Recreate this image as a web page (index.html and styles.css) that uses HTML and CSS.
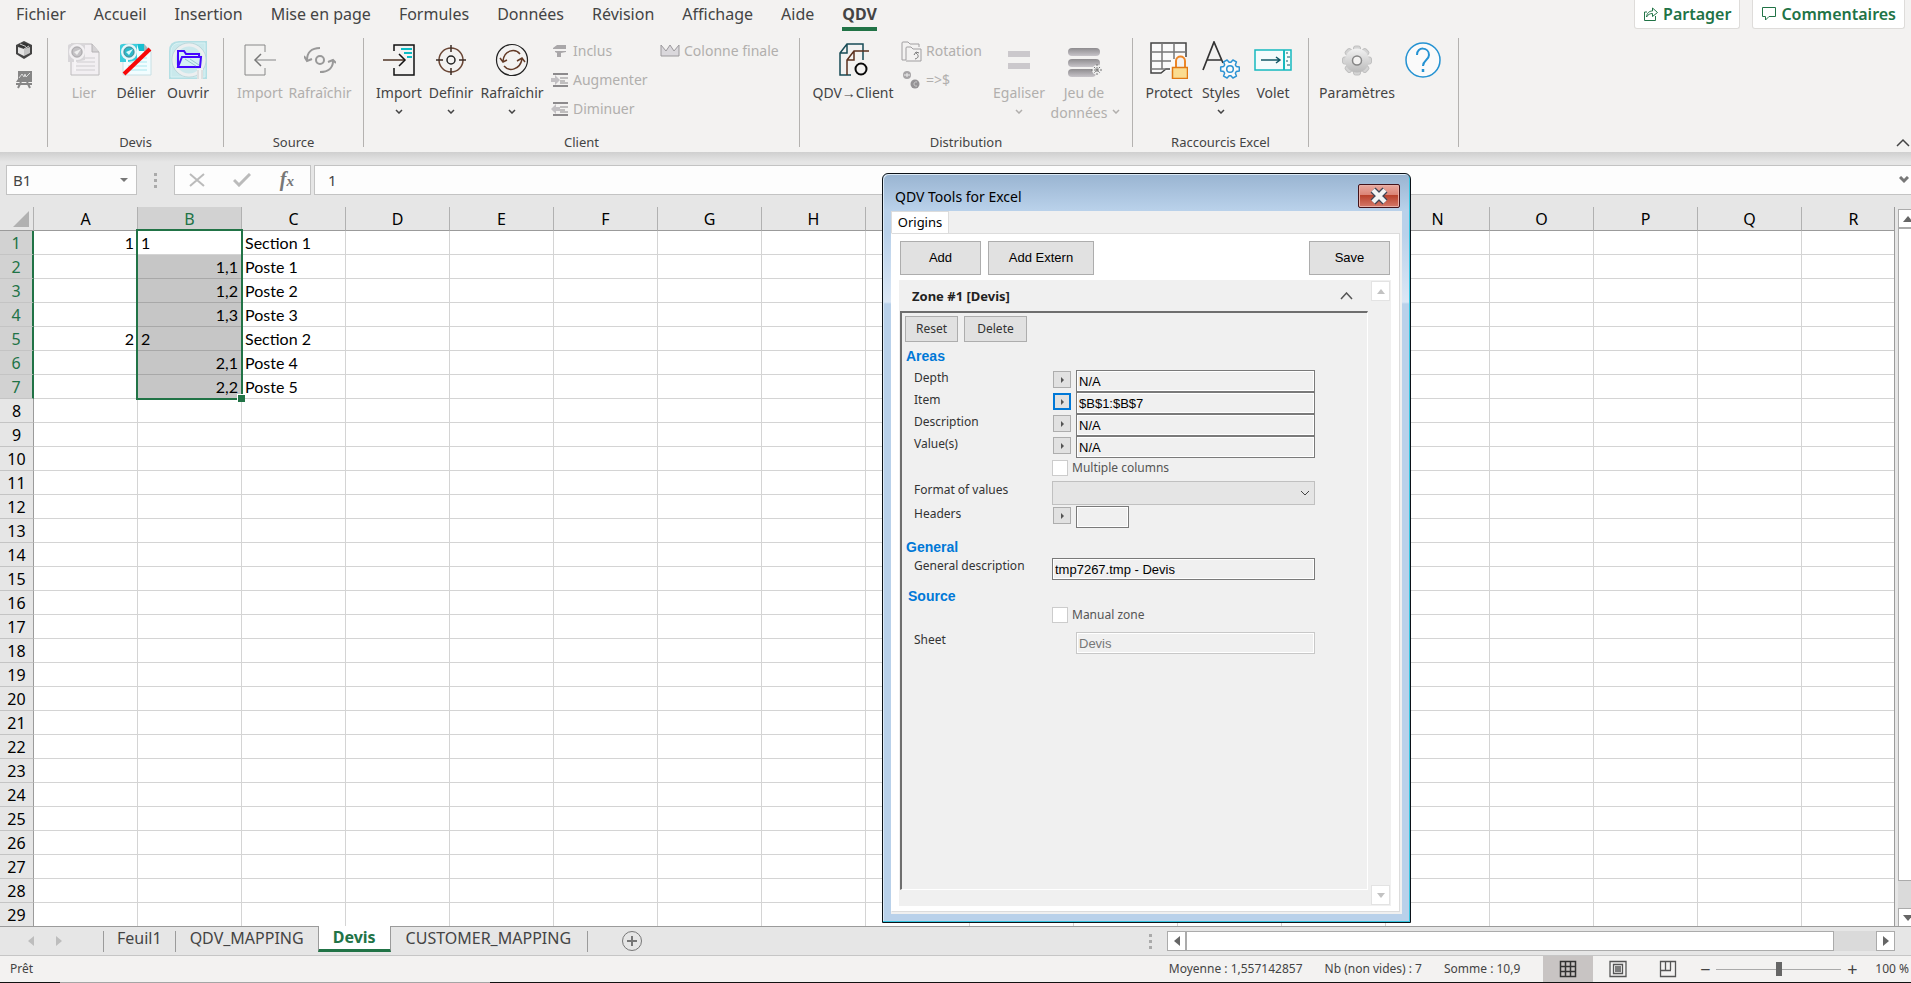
FILE: index.html
```html
<!DOCTYPE html>
<html lang="fr">
<head>
<meta charset="utf-8">
<title>Devis</title>
<link rel="stylesheet" href="styles.css">
</head>
<body>
<header class="ribbon">
  <div class="tabbar">
    <nav class="tabs">
      <a class="tab" href="#">Fichier</a><a class="tab" href="#">Accueil</a><a class="tab" href="#">Insertion</a><a class="tab" href="#">Mise en page</a><a class="tab" href="#">Formules</a><a class="tab" href="#">Données</a><a class="tab" href="#">Révision</a><a class="tab" href="#">Affichage</a><a class="tab" href="#">Aide</a><a class="tab current" href="#">QDV</a>
    </nav>
    <div class="share">
      <button class="share-btn"><svg width="16" height="16" viewBox="0 0 16 16"><path d="M4 6H1.500V14.500H12.500V10M3.500 11C4 7 6 5 9.500 5V2L14.500 6.500L9.500 10.500V7.500C7 7.500 5 8.500 3.500 11"/></svg>Partager</button>
      <button class="share-btn"><svg width="16" height="16" viewBox="0 0 16 16"><path d="M1.500 1.500H14.500V10.500H8L4.500 14V10.500H1.500Z"/></svg>Commentaires</button>
    </div>
  </div>
  <div class="groups">
    <section class="group quick">
      <button class="mini" aria-label="Cube"><svg width="18" height="20" viewBox="0 0 18 20"><path d="M9 1L17 5V14L9 19L1 14V5Z" fill="#444"/><path d="M3 6L9 3L15 5L9 8Z" fill="#333"/><path d="M3 7L9 9V16L3 13Z" fill="#e4e4e4"/><path d="M9 9L15 7V13L9 16Z" fill="#c4c4c4"/><path d="M9 9L14 6M5 4L11 6.500" stroke="#ccc"/></svg></button>
      <button class="mini" aria-label="Tableau"><svg width="18" height="19" viewBox="0 0 18 19"><path d="M3 1H17V12H1L3 9Z" fill="#868686"/><path d="M4 8L7 4L9 7L10 4L11 7L15 3" stroke="#ddd" fill="none"/><path d="M6 12L3 18M12 12L15 18M1 14H17" stroke="#868686" stroke-width="2"/></svg></button>
    </section>
    <section class="group devis">
      <div class="row">
        <button class="big w52" disabled><span class="ico"><svg width="32" height="34" viewBox="0 0 32 34"><path d="M3 1H24L31 9V32H3Z" fill="#f2eff2" stroke="#bebcbe"/><path d="M24 1V9H31" fill="#d5d3d5" stroke="#b4b2b4"/><path d="M12 15H27M9 19H27M7 23H27M7 27H27" stroke="#cfcdd0"/><path d="M0 3Q0 1 3 1H17V17L8 19H0Z" fill="#d8d6d9"/><path d="M7 16V28" stroke="#f6f4f6" stroke-width="2"/><circle cx="9" cy="9" r="7" fill="#dcdadc" stroke="#f2f0f2" stroke-width="2"/><circle cx="9" cy="9" r="5" fill="#c4c2c5" stroke="#a9a7aa"/><path d="M6 9L13 6L9 12Z" fill="#eee"/></svg></span><span>Lier</span></button>
        <button class="big w52"><span class="ico"><svg width="32" height="34" viewBox="0 0 32 34"><path d="M3 1H24L31 9V32H3Z" fill="#f2fdff" stroke="#c8dfe4"/><path d="M17 1H24V8H19Z" fill="#16bfd0"/><path d="M24 1L31 9H24Z" fill="#9fb9bd"/><path d="M12 15H27M9 19H27M7 23H27M7 27H27" stroke="#a9e7ef"/><path d="M0 3Q0 1 3 1H17V17L8 19H0Z" fill="#3ecddc"/><path d="M7 16V28" stroke="#f4fdff" stroke-width="2"/><circle cx="9" cy="9" r="7" fill="#a6e9f0" stroke="#eef6f8" stroke-width="2"/><circle cx="9" cy="9" r="5" fill="#2bb9c9" stroke="#4b8390"/><path d="M6 9L13 6L9 12Z" fill="#d9fafd"/><path d="M4 31L30 6" stroke="#f80808" stroke-width="4"/></svg></span><span>Délier</span></button>
        <button class="big w52"><span class="ico"><svg width="38" height="38" viewBox="0 0 38 38"><path d="M0 10Q0 0 10 0H38V38H0Z" fill="#b4dfe4"/><path d="M2 11Q2 2 11 2H36V36H2Z" fill="#c9e9ec" stroke="#d8f1f3"/><circle cx="20" cy="19" r="17" fill="none" stroke="#bcd4d8"/><circle cx="20" cy="19" r="15" fill="#cbe8ec" stroke="#eceff0" stroke-width="3"/><path d="M31 28V38" stroke="#f3f3f3" stroke-width="6"/><path d="M29 29V38M33 29V38" stroke="#ccc"/><path d="M9 26V10H15L17 13H30V16M9 26L13 16H32L31 26Z" fill="#d5f0f5" stroke="#4405ff" stroke-width="2"/><path d="M16 18L27 25M21 18L30 24" stroke="#97c8d0"/></svg></span><span>Ouvrir</span></button>
      </div>
      <h2>Devis</h2>
    </section>
    <section class="group source">
      <div class="row">
        <button class="big w50" disabled><span class="ico"><svg width="32" height="34" viewBox="0 0 32 34"><path d="M21 9V2H1V32H21V25" stroke="#888" fill="none"/><path d="M11 17H32" stroke="#aaa" stroke-width="1.500"/><path d="M17 11L11 17L17 23" stroke="#777" fill="none" stroke-width="1.500"/></svg></span><span>Import</span></button>
        <button class="big w70" disabled><span class="ico"><svg width="32" height="34" viewBox="0 0 32 34"><g fill="none" stroke="#999" stroke-width="2"><circle cx="16" cy="17" r="4"/><path d="M16 5C7 5 3 10 3 17M0 13L3 18L8 16M16 29C24 29 29 25 29 18M24 19L29 17L32 20"/></g></svg></span><span>Rafraîchir</span></button>
      </div>
      <h2>Source</h2>
    </section>
    <section class="group client">
      <div class="row">
        <button class="big w52"><span class="ico"><svg width="32" height="34" viewBox="0 0 32 34"><path d="M11 8V2H31V32H11V25" stroke="#111" stroke-width="1.500" fill="none"/><path d="M18 6H29M21 10H29M24 14H29" stroke="#0bbcc5" stroke-width="2"/><path d="M0 17H21" stroke="#4f3425" stroke-width="1.500"/><path d="M16 11L22 17L16 23" stroke="#111" stroke-width="1.500" fill="none"/></svg></span><span>Import</span><svg class="chev" viewBox="0 0 8 5"><path d="M1 1L4 4L7 1"/></svg></button>
        <button class="big w52"><span class="ico"><svg width="32" height="34" viewBox="0 0 32 34"><circle cx="16" cy="17" r="12" stroke="#6a4635" stroke-width="1.500" fill="none"/><circle cx="16" cy="17" r="4" stroke="#222" stroke-width="1.500" fill="none"/><path d="M16 2V9M16 25V32M1 17H8M24 17H31" stroke="#3c2c25" stroke-width="1.500"/></svg></span><span>Definir</span><svg class="chev" viewBox="0 0 8 5"><path d="M1 1L4 4L7 1"/></svg></button>
        <button class="big w70"><span class="ico"><svg width="34" height="34" viewBox="0 0 34 34"><circle cx="17" cy="17" r="15.500" stroke="#222" fill="none" stroke-width="1.200"/><path d="M25 11C20 5 9 7 8 18M5 15L8 19L12 17M9 23C14 29 25 27 27 16M22 18L27 15L30 19" stroke="#633a26" fill="none" stroke-width="1.500"/></svg></span><span>Rafraîchir</span><svg class="chev" viewBox="0 0 8 5"><path d="M1 1L4 4L7 1"/></svg></button>
        <div class="small-col first-col">
          <button class="small" disabled><svg width="18" height="16" viewBox="0 0 18 16"><path d="M2 5L6 2H15V6H2ZM4 8H15V9L10 10V14H6V10L4 9Z" fill="#a9a7a9"/></svg>Inclus</button>
          <button class="small" disabled><svg width="18" height="16" viewBox="0 0 18 16"><path d="M2 2H17M2 14H17" stroke="#8c8a8c" stroke-width="2"/><path d="M9 6H17M9 9H14M9 11H17" stroke="#8c8a8c"/><path d="M0 6H4V3L9 8L4 13V10H0Z" fill="#c2c0c3"/></svg>Augmenter</button>
          <button class="small" disabled><svg width="18" height="16" viewBox="0 0 18 16"><path d="M2 2H17M2 14H17" stroke="#8c8a8c" stroke-width="2"/><path d="M9 6H17M9 9H14M9 11H17" stroke="#8c8a8c"/><path d="M9 6H5V3L0 8L5 13V10H9Z" fill="#c2c0c3"/></svg>Diminuer</button>
        </div>
        <div class="small-col">
          <button class="small" disabled><svg width="20" height="16" viewBox="0 0 20 16"><path d="M1 2L6 8L10 2L14 8L19 2V13H1Z" fill="#dad8dc" stroke="#9b999c"/></svg>Colonne finale</button>
        </div>
      </div>
      <h2>Client</h2>
    </section>
    <section class="group distribution">
      <div class="row">
        <button class="big w88"><span class="ico"><svg width="32" height="34" viewBox="0 0 32 34"><path d="M14 32H3V10L10 1H26V17M3 10H10V1" fill="none" stroke="#174b56" stroke-width="1.500"/><path d="M10 32V17L17 8H32M10 17H17V8" fill="none" stroke="#5b301e" stroke-width="1.500"/><circle cx="24" cy="26" r="5.500" fill="none" stroke="#080808" stroke-width="2"/></svg></span><span>QDV→Client</span></button>
        <div class="small-col rot">
          <button class="small" disabled><svg width="21" height="21" viewBox="0 0 21 21"><path d="M5 19H1V2Q1 1 2 1H7L9 3H18V6M5 19V7Q5 6 6 6H10L12 8H20V20H5" fill="none" stroke="#a09ea0"/><path d="M14 18C18 17 18 14 15 12M13 14L15 11L18 12" fill="none" stroke="#777"/></svg>Rotation</button>
          <button class="small" disabled><svg width="21" height="21" viewBox="0 0 21 21"><circle cx="6" cy="5" r="4" fill="#a6a4a6"/><circle cx="14" cy="14" r="4.500" fill="#959395"/><path d="M3 5H9M6 3V7" stroke="#eee"/><path d="M16 12C12 11 12 17 16 16" stroke="#ccc" fill="none"/></svg>=&gt;$</button>
        </div>
        <button class="big w58" disabled><span class="ico"><svg width="24" height="34" viewBox="0 0 24 34"><path d="M1 8H23V14H1ZM1 20H23V26H1Z" fill="#cbc8cc"/></svg></span><span>Egaliser</span><svg class="chev" viewBox="0 0 8 5"><path d="M1 1L4 4L7 1"/></svg></button>
        <button class="big w72" disabled><span class="ico"><svg width="36" height="34" viewBox="0 0 36 34"><defs><linearGradient id="bar" x2="0" y2="1"><stop stop-color="#8e8c8f"/><stop offset="1" stop-color="#c7c4c9"/></linearGradient></defs><g fill="url(#bar)"><rect x="2" y="5" width="32" height="8" rx="4"/><rect x="2" y="16" width="32" height="8" rx="4"/><rect x="2" y="26" width="28" height="8" rx="4"/></g><circle cx="31" cy="27" r="5" fill="#eee"/><path d="M31 21V33M25 27H36M28 24L34 30M34 24L28 30" stroke="#777" stroke-dasharray="2 1"/></svg></span><span>Jeu de</span><span class="second">données<svg class="chev inline" viewBox="0 0 8 5"><path d="M1 1L4 4L7 1"/></svg></span></button>
      </div>
      <h2>Distribution</h2>
    </section>
    <section class="group raccourcis">
      <div class="row">
        <button class="big w52"><span class="ico"><svg width="38" height="38" viewBox="0 0 38 38"><path d="M1 2H36V30H18L13 32H1Z" fill="#fafafa"/><path d="M36 16V2H1V32H11L16 28H20" fill="none" stroke="#444" stroke-width="1.500"/><path d="M12 2V28M24 2V18M1 11H36M1 20H21M1 28H16" stroke="#777" stroke-width="1.500" fill="none"/><path d="M26 26V20C26 14 35 14 35 20V26" fill="#f3f2f1" stroke="#ed8627" stroke-width="2"/><rect x="22.500" y="26.500" width="15" height="11" fill="#fbdc90" stroke="#e07914" stroke-width="1.500"/></svg></span><span>Protect</span></button>
        <button class="big w52"><span class="ico"><svg width="38" height="38" viewBox="0 0 38 38"><path d="M1 29L12 1L21 22M5 19H19" stroke="#333" fill="none" stroke-width="1.700"/><g transform="translate(28 28)" fill="#fafafa" stroke="#2d93d3" stroke-width="1.500" stroke-linejoin="round"><path d="M6.300 -2.500L9.300 -2V2L6.300 2.500L5.400 4.200L6.400 7.100L2.900 9L.9 6.700H-.9L-2.900 9L-6.400 7.100L-5.400 4.200L-6.300 2.500L-9.300 2V-2L-6.300 -2.500L-5.400 -4.200L-6.400 -7.100L-2.900 -9L-.9 -6.700H.9L2.900 -9L6.400 -7.100L5.400 -4.200Z"/><circle r="3.300"/></g></svg></span><span>Styles</span><svg class="chev" viewBox="0 0 8 5"><path d="M1 1L4 4L7 1"/></svg></button>
        <button class="big w52"><span class="ico"><svg width="38" height="24" viewBox="0 0 38 24"><rect x="1" y="2" width="36" height="20" fill="#f4fcfc" stroke="#16b9bf" stroke-width="1.500"/><path d="M30 2V22" stroke="#16b9bf" stroke-width="2"/><path d="M7 12H25M22 9L26 12L22 15" stroke="#125866" stroke-width="1.500" fill="none"/><path d="M32 5H34M33 9H36M32 13H34M33 17H36" stroke="#125866"/></svg></span><span>Volet</span></button>
      </div>
      <h2>Raccourcis Excel</h2>
    </section>
    <section class="group params">
      <div class="row">
        <button class="big w82"><span class="ico"><svg width="32" height="34" viewBox="0 0 32 34"><defs><linearGradient id="gear" gradientUnits="userSpaceOnUse" x1="0" y1="3" x2="0" y2="32"><stop stop-color="#f8f8f8"/><stop offset="1" stop-color="#b4b4b4"/></linearGradient></defs><g stroke="#c0c0c0"><g fill="#d4d4d4"><rect x="12.500" y="3" width="7" height="29" rx="2"/><rect x="1.500" y="14" width="29" height="7" rx="2"/><rect x="12.500" y="3" width="7" height="29" rx="2" transform="rotate(45 16 17.500)"/><rect x="12.500" y="3" width="7" height="29" rx="2" transform="rotate(-45 16 17.500)"/></g><circle cx="16" cy="17.500" r="12" fill="url(#gear)" stroke="none"/></g><circle cx="16" cy="17.500" r="4.500" fill="#f3f2f1" stroke="#858585" stroke-width="1.500"/></svg></span><span>Paramètres</span></button>
        <button class="big w50" aria-label="Aide"><span class="ico"><svg width="38" height="38" viewBox="0 0 38 38"><circle cx="19" cy="19" r="17" fill="#fafafa" stroke="#2492d2" stroke-width="1.500"/><path d="M13 14C13 5 25 6 25 14C25 19 19 19 19 25" fill="none" stroke="#2492d2" stroke-width="2"/><path d="M19 28V31" stroke="#2492d2" stroke-width="2.500"/></svg></span></button>
      </div>
    </section>
    <button class="collapse" aria-label="Réduire le ruban"><svg width="14" height="9" viewBox="0 0 14 9"><path d="M1 8L7 2L13 8" fill="none" stroke="#444" stroke-width="1.500"/></svg></button>
  </div>
</header>

<div class="formula">
  <div class="namebox"><input aria-label="Zone de nom" value="B1"><svg width="8" height="4" viewBox="0 0 8 4"><path d="M0 0H8L4 4Z" fill="#777"/></svg></div>
  <span class="dots"><i></i><i></i><i></i></span>
  <div class="fx">
    <button aria-label="Annuler"><svg width="16" height="14" viewBox="0 0 16 14"><path d="M1 1L15 13M15 1L1 13" stroke="#bbb" stroke-width="2"/></svg></button>
    <button aria-label="Entrer"><svg width="18" height="14" viewBox="0 0 18 14"><path d="M1 7L6 12L17 1" fill="none" stroke="#bbb" stroke-width="3"/></svg></button>
    <button aria-label="Insérer une fonction" class="fxi">f<small>x</small></button>
  </div>
  <div class="entry"><input aria-label="Formule" value="1"><svg width="10" height="8" viewBox="0 0 10 8"><path d="M1 1L5 5L9 1" fill="none" stroke="#777" stroke-width="3"/></svg></div>
</div>

<main class="workspace">
  <div class="sheet">
    <table class="cells"><thead></thead><tbody></tbody></table>
    <div class="selection"></div>
  </div>
  <div class="vscroll"><button aria-label="Haut"><svg width="10" height="6" viewBox="0 0 10 6"><path d="M0 6L5 0L10 6Z"/></svg></button><div class="vthumb"></div><div class="vtrack"></div><button aria-label="Bas"><svg width="10" height="6" viewBox="0 0 10 6"><path d="M0 0H10L5 6Z"/></svg></button></div>
</main>

<div class="sheetbar">
  <div class="arrows"><svg width="6" height="10" viewBox="0 0 6 10"><path d="M6 0V10L0 5Z"/></svg><svg width="6" height="10" viewBox="0 0 6 10"><path d="M0 0V10L6 5Z"/></svg></div>
  <nav class="sheets"><a href="#">Feuil1</a><a href="#">QDV_MAPPING</a><a href="#" class="on">Devis</a><a href="#">CUSTOMER_MAPPING</a></nav>
  <button class="plus" aria-label="Nouvelle feuille"><svg width="22" height="22" viewBox="0 0 22 22"><circle cx="11" cy="11" r="9.500" fill="none" stroke="#777"/><path d="M11 6V16M6 11H16" stroke="#777" stroke-width="2"/></svg></button>
  <span class="dots"><i></i><i></i><i></i></span>
  <div class="hscroll"><button aria-label="Gauche"><svg width="6" height="10" viewBox="0 0 6 10"><path d="M6 0V10L0 5Z"/></svg></button><div class="hthumb"></div><div class="htrack"></div><button aria-label="Droite"><svg width="6" height="10" viewBox="0 0 6 10"><path d="M0 0V10L6 5Z"/></svg></button></div>
</div>

<footer class="status">
  <span>Prêt</span>
  <div class="stats"><span>Moyenne : 1,557142857</span><span>Nb (non vides) : 7</span><span>Somme : 10,9</span></div>
  <div class="views">
    <button class="on" aria-label="Normal"><svg width="18" height="18" viewBox="0 0 18 18"><path d="M1.500 1.500H16.500V16.500H1.500ZM6.500 1V17M11.500 1V17M1 6.500H17M1 11.500H17" fill="none" stroke="#333" stroke-width="1.500"/></svg></button>
    <button aria-label="Mise en page"><svg width="18" height="18" viewBox="0 0 18 18"><path d="M1 1.500H17V16.500H1ZM4.500 4.500H13.500V13.500H4.500ZM6 7H12M6 9H12M6 11H12" fill="none" stroke="#555" stroke-width="1.300"/></svg></button>
    <button aria-label="Sauts de page"><svg width="18" height="18" viewBox="0 0 18 18"><path d="M1.500 1.500H16.500V16.500H1.500ZM6.500 1V10M11.500 1V10M1 10.500H12" fill="none" stroke="#555" stroke-width="1.300"/></svg></button>
  </div>
  <div class="zoom"><button>−</button><input type="range" min="0" max="200" value="100" aria-label="Zoom"><button>+</button></div>
  <span class="pct">100 %</span>
</footer>

<section class="dialog" role="dialog" aria-labelledby="dlg-title">
  <div class="titlebar"><h1 id="dlg-title">QDV Tools for Excel</h1><button class="close" aria-label="Fermer"><svg width="20" height="18" viewBox="0 0 20 18"><path d="M4 3L16 15M16 3L4 15" stroke="#3c4657" stroke-width="7"/><path d="M4 3L16 15M16 3L4 15" stroke="#f3f3f3" stroke-width="4.500"/></svg></button></div>
  <div class="client-area">
    <div class="dlg-tabs"><button>Origins</button></div>
    <div class="page">
      <div class="actions"><button class="btn w81">Add</button><button class="btn w106">Add Extern</button><button class="btn w81 end">Save</button></div>
      <div class="zones">
        <div class="zone">
          <div class="zone-head"><h2>Zone #1 [Devis]</h2><svg width="13" height="8" viewBox="0 0 13 8"><path d="M1 7L6.500 1L12 7" fill="none" stroke="#555" stroke-width="1.500"/></svg></div>
          <div class="inset">
            <div class="mini-actions"><button class="btn">Reset</button><button class="btn wide">Delete</button></div>
            <h3>Areas</h3>
            <div class="f"><label for="depth">Depth</label><button class="pick" aria-label="Depth"></button><input id="depth" value="N/A"></div>
            <div class="f"><label for="item">Item</label><button class="pick focus" aria-label="Item"></button><input id="item" value="$B$1:$B$7"></div>
            <div class="f"><label for="desc">Description</label><button class="pick" aria-label="Description"></button><input id="desc" value="N/A"></div>
            <div class="f"><label for="vals">Value(s)</label><button class="pick" aria-label="Value(s)"></button><input id="vals" value="N/A"></div>
            <div class="c"><input type="checkbox" id="multi"><label for="multi">Multiple columns</label></div>
            <div class="f tall"><label for="fmt">Format of values</label><span class="sel"><select id="fmt" disabled><option></option></select><svg width="10" height="6" viewBox="0 0 10 6"><path d="M1 1L5 5L9 1" fill="none" stroke="#444"/></svg></span></div>
            <div class="f"><label for="hdr">Headers</label><button class="pick" aria-label="Headers"></button><input id="hdr" class="short"></div>
            <h3 class="general">General</h3>
            <div class="f"><label for="gdesc">General description</label><input id="gdesc" class="full" value="tmp7267.tmp - Devis"></div>
            <h3 class="src">Source</h3>
            <div class="c"><input type="checkbox" id="manual"><label for="manual">Manual zone</label></div>
            <div class="f sheet-row"><label for="sheet">Sheet</label><span class="pick none"></span><input id="sheet" disabled value="Devis"></div>
          </div>
        </div>
        <div class="dscroll"><button aria-label="Monter"><svg width="8" height="5" viewBox="0 0 8 5"><path d="M0 5L4 0L8 5Z"/></svg></button><button aria-label="Descendre"><svg width="8" height="5" viewBox="0 0 8 5"><path d="M0 0H8L4 5Z"/></svg></button></div>
      </div>
    </div>
  </div>
</section>
<script src="sheet.js"></script>
</body>
</html>
```
FILE: styles.css
```css
* { box-sizing: border-box; }
body { margin: 0; height: 100vh; display: flex; flex-direction: column; overflow: hidden; position: relative; background: #e6e6e6; color: #444; font: 14px/20px "Noto Sans", sans-serif; }
button { font: inherit; color: inherit; background: none; border: 0; padding: 0; margin: 0; }
input, select { font: inherit; color: inherit; border: 0; border-radius: 0; outline: 0; padding: 0; margin: 0; min-width: 0; }
a { color: inherit; text-decoration: none; }
h1, h2, h3 { margin: 0; font-weight: 400; }
svg { display: block; flex: none; }

.ribbon { background: #f3f2f1; height: 152px; flex: none; display: flex; flex-direction: column; }
.tabbar { display: flex; justify-content: space-between; height: 38px; padding: 0 6px 0 16px; }
.tabs { display: flex; gap: 28px; font-size: 16px; line-height: 28px; height: 31px; white-space: nowrap; }
.tab.current { font-weight: 700; border-bottom: 4px solid #217346; line-height: 28px; height: 31px; }
.share { display: flex; gap: 12px; }
.share-btn { height: 29px; display: flex; align-items: center; gap: 4px; padding: 0 8px; background: #fff; border: 1px solid #dedcda; border-top: 0; border-radius: 0 0 3px 3px; color: #217346; font-weight: 600; font-size: 16px; }
.share-btn svg { fill: none; stroke: #217346; }
.groups { display: flex; height: 109px; position: relative; }
.group { border-right: 1px solid #b4b2b0; display: flex; flex-direction: column; justify-content: space-between; flex: none; }
.group h2 { font-size: 13px; line-height: 10px; text-align: center; }
.row { display: flex; }
.quick { width: 48px; justify-content: flex-start; align-items: center; gap: 10px; padding-top: 2px; }
.devis { width: 176px; } .devis .row { padding-left: 10px; }
.source { width: 140px; } .source .row { padding-left: 11px; }
.client { width: 436px; } .client .row { padding-left: 9px; }
.distribution { width: 333px; } .distribution .row { padding-left: 9px; }
.raccourcis { width: 176px; } .raccourcis .row { padding-left: 10px; }
.params { width: 150px; } .params .row { padding-left: 7px; }
.big { display: flex; flex-direction: column; align-items: center; white-space: nowrap; padding-top: 3px; flex: none; }
.big:disabled, .small:disabled { color: #b1afad; }
.ico { height: 38px; display: flex; align-items: center; justify-content: center; margin-bottom: 4px; }
.w50 { width: 50px; } .w52 { width: 52px; } .w58 { width: 58px; } .w70 { width: 70px; } .w72 { width: 72px; } .w82 { width: 82px; } .w88 { width: 88px; }
.chev { width: 8px; height: 5px; margin-top: 6px; fill: none; stroke: currentColor; stroke-width: 1.5; }
.second { position: relative; margin-right: 10px; }
.chev.inline { position: absolute; right: -13px; top: 0; }
.small-col { display: flex; flex-direction: column; gap: 3px; }
.first-col { width: 113px; padding-left: 4px; }
.rot { width: 93px; padding-left: 4px; }
.small { display: flex; align-items: center; gap: 4px; height: 26px; white-space: nowrap; font-size: 14px; }
.collapse { position: absolute; right: 1px; bottom: 0; }

.formula { height: 55px; flex: none; display: flex; padding: 13px 0 12px 6px; background: linear-gradient(#cfcfcf, #e6e6e6 10px); }
.namebox { width: 131px; background: #fdfdfd; border: 1px solid #c3c3c3; display: flex; align-items: center; padding: 0 8px 0 6px; }
.namebox input { flex: 1; background: none; font-size: 15px; }
.dots { display: flex; flex-direction: column; justify-content: center; gap: 3px; width: 37px; align-items: center; }
.dots i { width: 3px; height: 3px; background: #aaa; }
.fx { width: 137px; border: 1px solid #c3c3c3; background: #fdfdfd; display: flex; align-items: center; justify-content: space-between; padding: 0 16px 0 14px; }
.fxi { font: italic bold 20px/26px "Liberation Serif", serif; color: #777; }
.fxi small { font-size: 15px; }
.entry { flex: 1; margin-left: 3px; border: 1px solid #c3c3c3; border-right: 0; background: #fdfdfd; display: flex; align-items: center; padding: 0 2px 0 13px; }
.entry input { flex: 1; background: none; font-size: 15px; }

.workspace { flex: 1; min-height: 0; display: flex; gap: 3px; overflow: hidden; }
.sheet { flex: 1; min-width: 0; overflow: hidden; position: relative; border-right: 1px solid #9b9b9b; }
.cells { border-collapse: separate; border-spacing: 0; table-layout: fixed; width: 1906px; background: #fff; color: #000; font-size: 15px; }
.cells th, .cells td { height: 24px; padding: 0 3px; line-height: 22px; border-right: 1px solid #d4d4d4; border-bottom: 1px solid #d4d4d4; text-align: left; white-space: nowrap; overflow: hidden; }
.cells td.num { text-align: right; }
.cells th { font-weight: 400; background: #e6e6e6; text-align: center; }
.cells td { font-family: Lato, "Noto Sans", sans-serif; font-size: 16px; }
.cells thead th { border-bottom-color: #9b9b9b; border-right-color: #b1b1b1; font-size: 16px; }
.cells thead th.corner { width: 34px; padding: 0 4px 0 0; }
.corner svg { margin-left: auto; }
.cells tbody th { border-right-color: #9b9b9b; border-bottom-color: #c4c4c4; padding: 0; font-size: 16px; }
.cells .hot { background: #d2d2d2; color: #217346; }
.cells tbody .hot { border-right: 2px solid #217346; }
.cells td.picked { background: #c6c6c6; border-bottom-color: #a8a8a8; }
.selection { position: absolute; left: 136px; top: 22px; width: 107px; height: 171px; border: 2px solid #217346; }
.selection::after { content: ""; position: absolute; right: -4px; bottom: -4px; width: 7px; height: 7px; background: #217346; border-top: 1px solid #fff; border-left: 1px solid #fff; }
.vscroll { width: 13px; display: flex; flex-direction: column; padding-top: 2px; }
.vscroll button { height: 19px; border: 1px solid #ababab; border-right: 0; background: #fff; padding-left: 4px; }
.vscroll svg, .hscroll svg { fill: #666; }
.vthumb { flex: 1; background: #fff; border: 1px solid #ababab; border-right: 0; }
.vtrack { height: 27px; background: #dadada; }

.sheetbar { height: 29px; flex: none; display: flex; border-top: 1px solid #9b9b9b; margin-top: -1px; padding-right: 16px; position: relative; }
.arrows { width: 103px; display: flex; gap: 22px; padding: 9px 0 0 28px; fill: #bdbdbd; }
.sheets { display: flex; font-size: 16px; }
.sheets a { border-left: 1px solid #9b9b9b; padding: 0 14px; height: 21px; margin-top: 4px; line-height: 14px; }
.sheets a:first-child { padding: 0 13px; }
.sheets a:last-child { border-right: 1px solid #9b9b9b; border-left: 0; padding: 0 16px 0 15px; }
.sheets .on { background: #fff; color: #217346; font-weight: 700; border-right: 1px solid #9b9b9b; border-bottom: 3px solid #217346; height: 26px; margin-top: -1px; line-height: 22px; }
.plus { margin-left: 33px; height: 28px; }
.sheetbar .dots { margin-left: auto; width: 34px; }
.hscroll { width: 728px; display: flex; height: 20px; margin-top: 4px; }
.hscroll button { width: 19px; border: 1px solid #ababab; background: #fff; padding-left: 6px; }
.hthumb { flex: 1; border: 1px solid #ababab; background: #fff; }
.htrack { width: 42px; background: #dadada; }

.status { height: 28px; flex: none; display: flex; align-items: center; background: linear-gradient(90deg, #111 60px, #a5a5a5 60px, #a5a5a5 490px, #111 490px) bottom / 100% 1px no-repeat #f3f2f1; border-top: 1px solid #c6c6c6; padding: 0 2px 1px 10px; font-size: 12px; white-space: nowrap; }
.stats { margin-left: auto; display: flex; gap: 22px; padding-right: 23px; }
.views { display: flex; align-self: stretch; }
.views button { width: 50px; display: flex; justify-content: center; align-items: center; }
.views .on { background: #c8c4c3; }
.zoom { display: flex; align-items: center; gap: 5px; padding: 0 17px 0 6px; }
.zoom button { width: 12px; font-size: 18px; }
.zoom input { width: 125px; height: 16px; appearance: none; background: linear-gradient(#aaa, #aaa) center / 100% 1px no-repeat; }
.zoom input::-webkit-slider-thumb { appearance: none; width: 6px; height: 14px; background: #666; }

.dialog { position: absolute; left: 882px; top: 173px; width: 529px; height: 750px; border: 1px solid #0c1218; border-radius: 6px 6px 0 0; padding: 0 8px 8px; background: linear-gradient(#99b4d1, #b9d1ea 36px, #b9d1ea 60px, #dbe7f5 128px, #b9d1ea 130px); box-shadow: inset -1px -1px #35c5e0, inset 1px 1px #dceaf6; display: flex; flex-direction: column; color: #000; }
.titlebar { height: 37px; display: flex; justify-content: space-between; align-items: flex-start; padding: 10px 2px 0 4px; }
.titlebar h1 { font-size: 14px; line-height: 26px; }
.close { width: 42px; height: 24px; border: 1px solid #43131a; border-radius: 2px; background: linear-gradient(#e9a99f, #db8476 45%, #b8402a 46%, #d5796a); display: flex; align-items: center; justify-content: center; box-shadow: inset 0 0 0 1px #e8b0a8; }
.client-area { flex: 1; background: #f0f0f0; display: flex; flex-direction: column; padding: 0 2px 2px 0; min-height: 0; }
.dlg-tabs button { height: 23px; width: 58px; padding-bottom: 2px; background: #fff; border: 1px solid #dcdcdc; border-bottom: 0; font-size: 13px; line-height: 18px; display: block; }
.page { flex: 1; background: #fff; border: 1px solid #dcdcdc; border-left-color: #fff; margin-top: -1px; padding: 7px 8px 5px 7px; display: flex; flex-direction: column; min-height: 0; }
.actions { display: flex; gap: 7px; padding: 0 1px; }
.btn { height: 34px; background: #e1e1e1; border: 1px solid #adadad; font: 13px/16px "Liberation Sans", sans-serif; }
.w81 { width: 81px; } .w106 { width: 106px; } .end { margin-left: auto; }
.zones { flex: 1; margin-top: 5px; background: #f0f0f0; display: flex; justify-content: space-between; font-size: 12px; color: #333; }
.zone { width: 469px; padding: 0 0 16px 1px; display: flex; flex-direction: column; }
.zone-head { display: flex; align-items: center; justify-content: space-between; height: 31px; padding: 0 15px 0 12px; }
.zone-head h2 { font: bold 13px/20px "Noto Sans", sans-serif; color: #222; }
.inset { flex: 1; border: 1px solid #fff; border-left: 2px solid #6e6e6e; border-top: 2px solid #6e6e6e; padding: 3px 52px 0 3px; }
.mini-actions { display: flex; gap: 6px; }
.mini-actions .btn { height: 26px; width: 53px; font: 12px/16px "Noto Sans", sans-serif; }
.mini-actions .wide { width: 63px; }
.inset h3 { font: bold 14px/20px "Liberation Sans", sans-serif; color: #0078d7; padding: 4px 1px; height: 28px; }
.f { display: flex; height: 22px; }
.f > label { width: 147px; padding-left: 9px; line-height: 15px; flex: none; }
.f input { flex: 1; height: 22px; border: 1px solid #7a7a7a; box-shadow: inset 0 0 0 1px #fff; background: #f0f0f0; color: #000; font: 13px/20px "Liberation Sans", sans-serif; padding: 1px 2px 0; }
.f input.short { flex: none; width: 53px; }
.f input:disabled { border-color: #c8c8c8; color: #777; }
.pick { width: 18px; height: 17px; margin: 1px 5px 0 1px; flex: none; border: 1px solid #adadad; background: #e1e1e1; display: flex; align-items: center; justify-content: center; }
.pick::after { content: ""; border: 3px solid transparent; border-left-color: #555; border-right: 0; }
.pick.focus { border: 2px solid #0078d7; }
.pick.none { visibility: hidden; }
.c { display: flex; align-items: center; padding: 1px 0 4px 147px; gap: 4px; color: #555; height: 23px; }
.c input { appearance: none; width: 16px; height: 16px; border: 1px solid #ccc; background: #fff; }
.f.tall { height: 25px; }
.tall label { line-height: 18px; }
.sel { flex: 1; display: flex; position: relative; }
.sel select { flex: 1; height: 24px; appearance: none; background: #e1e1e1; border: 1px solid #adadad; }
.sel svg { position: absolute; right: 5px; top: 9px; }
.inset .general { padding-top: 9px; height: 30px; }
.inset .src { padding: 6px 3px 0; height: 25px; }
.sheet-row { margin-top: 4px; }
.dscroll { width: 20px; display: flex; flex-direction: column; justify-content: space-between; padding: 1px 1px 1px 0; }
.dscroll button { height: 20px; background: #fff; border: 1px solid #e3e3e3; display: flex; align-items: center; justify-content: center; fill: #c2c2c2; }
```
FILE: sheet.js
```js
const columns = "ABCDEFGHIJKLMNOPQR".split("");
const rows = [
  ["1", "1", "Section 1"],
  ["", "1,1", "Poste 1"],
  ["", "1,2", "Poste 2"],
  ["", "1,3", "Poste 3"],
  ["2", "2", "Section 2"],
  ["", "2,1", "Poste 4"],
  ["", "2,2", "Poste 5"]
];

const corner = '<th class="corner"><svg width="16" height="16" viewBox="0 0 16 16"><path d="M16 0V16H0Z" fill="#b1b1b1"/></svg></th>';
document.querySelector(".cells thead").innerHTML =
  "<tr>" + corner + columns.map(c => `<th${c === "B" ? ' class="hot"' : ""}>${c}</th>`).join("") + "</tr>";

let html = "";
for (let r = 0; r < 29; r++) {
  const data = rows[r] || [];
  html += `<tr><th${r < 7 ? ' class="hot"' : ""}>${r + 1}</th>`;
  columns.forEach((c, i) => {
    const text = data[i] || "";
    const classes = [];
    if (i === 0 || (i === 1 && text.includes(","))) classes.push("num");
    if (i === 1 && r > 0 && r < 7) classes.push("picked");
    html += `<td${classes.length ? ` class="${classes.join(" ")}"` : ""}>${text}</td>`;
  });
  html += "</tr>";
}
document.querySelector(".cells tbody").innerHTML = html;
```
